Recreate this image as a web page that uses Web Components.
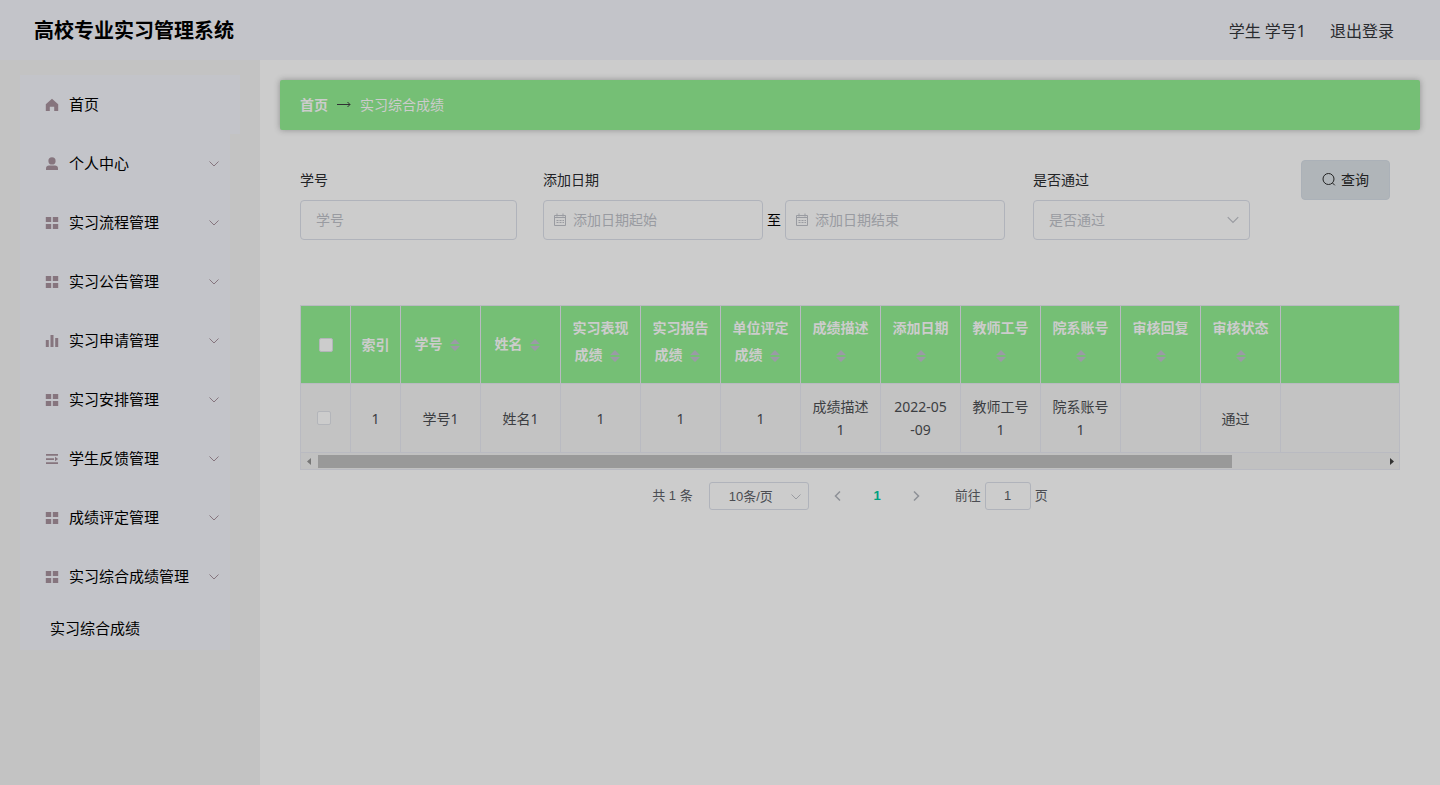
<!DOCTYPE html>
<html lang="zh-CN">
<head>
<meta charset="utf-8">
<title>高校专业实习管理系统</title>
<style>
html, body { margin: 0; min-height: 100%; }
body { background: #ccc; color: #000; font-family: "Noto Sans", "Noto Sans CJK SC", sans-serif; font-size: 14px; }
</style>
</head>
<body>
<app-shell>
  <app-header slot="header" name="高校专业实习管理系统" user="学生 学号1"></app-header>
  <side-menu slot="side">
    <menu-item icon="home" wide>首页</menu-item>
    <menu-item icon="user" expandable>个人中心</menu-item>
    <menu-item icon="grid" expandable>实习流程管理</menu-item>
    <menu-item icon="grid" expandable>实习公告管理</menu-item>
    <menu-item icon="data" expandable>实习申请管理</menu-item>
    <menu-item icon="grid" expandable>实习安排管理</menu-item>
    <menu-item icon="unfold" expandable>学生反馈管理</menu-item>
    <menu-item icon="grid" expandable>成绩评定管理</menu-item>
    <menu-item icon="grid" expandable>实习综合成绩管理</menu-item>
    <menu-item sub>实习综合成绩</menu-item>
  </side-menu>
  <crumb-bar current="实习综合成绩"></crumb-bar>
  <search-form></search-form>
  <score-table></score-table>
  <page-nav></page-nav>
</app-shell>
<script>
const chevron = '<svg class="chev" width="12" height="12" viewBox="0 0 12 12" fill="none" stroke="currentColor" aria-hidden="true"><path d="M1.5 3.5 6 8l4.500-4.500"/></svg>';
const icons = {
  home: '<path d="M7 .8.8 6.200V13h4V8.800h4.400V13h4V6.200z"/>',
  user: '<circle cx="7" cy="3.900" r="3.600"/><path d="M1 13v-1.600C1 9.600 2.300 8.600 4 8.600h6c1.700 0 3 1 3 2.800V13z"/>',
  grid: '<path d="M.8 1h5.400v5H.8zM7.800 1h5.400v5H7.800zM.8 8h5.400v5H.8zM7.800 8h5.400v5H7.800z"/>',
  data: '<path d="M.8 6h3v7h-3zM5.500 1h3v12h-3zM10.200 4h3v9h-3z"/>',
  unfold: '<path d="M1 2h12v1.700H1zM1 6.200h8v1.700H1zM1 10.300h12V12H1zM10 4.700 13.200 7 10 9.300z"/>'
};

class Base extends HTMLElement {
  connectedCallback() {
    if (this.shadowRoot) return;
    this.attachShadow({ mode: 'open' }).innerHTML =
      '<style>:host{display:block}*{box-sizing:border-box}input,select,button{font:inherit;margin:0}' + this.css() + '</style>' + this.html();
  }
}

customElements.define('app-shell', class extends Base {
  css() { return `
    :host { display: flex; flex-direction: column; min-height: 100vh; }
    .body { display: flex; flex: 1; }
    aside { width: 260px; flex: none; background: #c3c3c3; padding: 15px 20px; box-sizing: border-box; }
    main { flex: 1; min-width: 0; padding: 20px; }`; }
  html() { return '<slot name="header"></slot><div class="body"><aside><slot name="side"></slot></aside><main><slot></slot></main></div>'; }
});

customElements.define('app-header', class extends Base {
  css() { return `
    header { display: flex; align-items: center; height: 60px; padding: 2px 46px 0 34px; background: #c3c4c9; }
    h1 { margin: 0; flex: 1; font-size: 20px; line-height: 30px; font-weight: 700; }
    nav { display: flex; gap: 24px; font-size: 16px; line-height: 30px; color: #292b2f; }
    a { color: inherit; text-decoration: none; }`; }
  html() { return `<header><h1>${this.getAttribute('name')}</h1><nav><span>${this.getAttribute('user')}</span><a href="#logout">退出登录</a></nav></header>`; }
});

customElements.define('side-menu', class extends Base {
  css() { return ''; }
  html() { return '<nav><slot></slot></nav>'; }
});

customElements.define('menu-item', class extends Base {
  css() { return `
    :host { margin-right: 10px; background: #c3c4c9; }
    :host([wide]) { margin-right: 0; }
    a { display: flex; align-items: center; height: 59px; padding: 0 10px 0 25px; color: #000; font-size: 15px; line-height: 25px; text-decoration: none; }
    :host([sub]) a { height: 44px; padding-left: 30px; }
    .icon { margin-right: 10px; fill: #86757e; }
    .chev { margin-left: auto; color: #86757e; }`; }
  html() {
    const icon = icons[this.getAttribute('icon')];
    return `<a href="#">${icon ? `<svg class="icon" width="14" height="14" viewBox="0 0 14 14" aria-hidden="true">${icon}</svg>` : ''}<slot></slot>${this.hasAttribute('expandable') ? chevron : ''}</a>`;
  }
});

customElements.define('crumb-bar', class extends Base {
  css() { return `
    nav { display: flex; align-items: center; height: 50px; padding: 0 20px; background: #75bf75; border-radius: 2px; box-shadow: 0 0 6px rgba(0,0,0,.3); line-height: 24px; color: #ccc; }
    a { color: inherit; font-weight: 700; text-decoration: none; }
    svg { margin: 0 8px; }`; }
  html() { return `<nav aria-label="面包屑"><a href="#">首页</a><svg width="16" height="10" viewBox="0 0 16 10" fill="none" stroke="#303133" aria-hidden="true"><path d="M1 4.500h13M11.500 2 14 4.500 11.500 7"/></svg><span>${this.getAttribute('current')}</span></nav>`; }
});

customElements.define('search-form', class extends Base {
  css() { return `
    form { display: flex; align-items: flex-start; padding: 30px 30px 0 20px; }
    label { display: block; line-height: 40px; color: #222326; }
    .field { width: 217px; margin-right: 26px; }
    .range { margin-right: 28px; }
    .row { display: flex; align-items: center; gap: 4px; line-height: 24px; }
    .box { position: relative; display: block; }
    .row .box { width: 220px; }
    input, select { display: block; width: 100%; height: 40px; padding: 0 15px 2px; border: 1px solid #b0b3bb; border-radius: 4px; background: none; color: #999ba1; appearance: none; outline: 0; }
    input::placeholder { color: #999ba1; opacity: 1; }
    .row input { padding-left: 29px; }
    .cal { position: absolute; left: 10px; top: 13px; color: #999ba1; }
    .chev { position: absolute; right: 10px; top: 13px; width: 14px; height: 14px; color: #999ba1; }
    button { display: flex; align-items: center; justify-content: center; gap: 5px; width: 89px; height: 40px; margin-left: auto; padding: 0 0 2px; border: 1px solid #abb1b8; border-radius: 4px; background: #b0b5b9; color: #222; }`; }
  html() {
    const cal = '<svg class="cal" width="14" height="14" viewBox="0 0 14 14" fill="none" stroke="currentColor" aria-hidden="true"><path d="M1.500 2.500h11v10h-11zM1.500 4.500h11M4 .5v3M10 .5v3M3.500 7.500h2M6.500 7.500h2M9.500 7.500h1.500M3.500 9.500h2M6.500 9.500h2M9.500 9.500h1.500"/></svg>';
    return `<form>
      <div class="field"><label for="no">学号</label><input id="no" placeholder="学号"></div>
      <div class="range"><label for="from">添加日期</label><div class="row">
        <span class="box">${cal}<input id="from" placeholder="添加日期起始"></span><span>至</span>
        <span class="box">${cal}<input aria-label="添加日期结束" placeholder="添加日期结束"></span></div></div>
      <div class="field"><label for="pass">是否通过</label><span class="box"><select id="pass"><option>是否通过</option></select>${chevron}</span></div>
      <button type="button"><svg width="14" height="14" viewBox="0 0 14 14" fill="none" stroke="currentColor" aria-hidden="true"><circle cx="6.500" cy="7" r="5.500"/><path d="m10.500 11 2.300 2.300"/></svg>查询</button>
    </form>`;
  }
});

customElements.define('score-table', class extends Base {
  css() { return `
    :host { margin: 65px 20px 0; }
    .frame { border: 1px solid #b9bac1; }
    .view { overflow: hidden; }
    table { width: 100%; min-width: 1280px; table-layout: fixed; border-collapse: separate; border-spacing: 0; }
    th, td { padding: 10px; text-align: center; vertical-align: middle; line-height: 23px; border-right: 1px solid #b9bac1; border-bottom: 1px solid #b9bac1; word-break: break-all; }
    th { height: 78px; background: #75bf75; color: #ccc; font-weight: 700; }
    td { height: 69px; background: #c3c3c3; color: #3c3e42; }
    .narrow { width: 50px; padding: 10px 0; }
    .norm { width: 80px; }
    .sort { display: inline-flex; width: 24px; height: 34px; align-items: center; justify-content: center; vertical-align: middle; }
    input { display: block; width: 14px; height: 14px; margin: 0 auto; appearance: none; border: 1px solid #b3b5ba; border-radius: 2px; background: #ccc; }
    td input { margin-left: 16px; }
    .tag { padding-right: 10px; }
    .bar { display: flex; align-items: center; height: 16px; background: #c1c1c1; }
    .thumb { flex: 914; height: 13px; background: #999; }
    .rest { flex: 151; }
    .bar svg { flex: none; }`; }
  html() {
    const sort = '<span class="sort"><svg width="10" height="12" viewBox="0 0 10 12" fill="#9a9ba5" aria-hidden="true"><path d="M0 5 5 0l5 5zM0 7h10l-5 5z"/></svg></span>';
    const heads = ['学号','姓名','实习表现成绩','实习报告成绩','单位评定成绩','成绩描述','添加日期','教师工号','院系账号','审核回复','审核状态'];
    const cells = ['学号1','姓名1','1','1','1','成绩描述1','2022-05<br>-09','教师工号1','院系账号1','','<span class="tag">通过</span>'];
    return `<div class="frame"><div class="view"><table>
      <thead><tr><th class="narrow"><input type="checkbox" aria-label="全选"></th><th class="narrow">索引</th>${heads.map(h => `<th class="norm">${h}${sort}</th>`).join('')}<th></th></tr></thead>
      <tbody><tr><td class="narrow"><input type="checkbox" aria-label="选择第1行"></td><td class="narrow">1</td>${cells.map(c => `<td>${c}</td>`).join('')}<td></td></tr></tbody>
    </table></div>
    <div class="bar" aria-hidden="true"><svg width="17" height="17" viewBox="0 0 17 17" fill="#777"><path d="M10 5v7L6 8.500z"/></svg><span class="thumb"></span><span class="rest"></span><svg width="16" height="17" viewBox="0 0 16 17" fill="#333"><path d="M7 5v7l4-3.500z"/></svg></div></div>`;
  }
});

customElements.define('page-nav', class extends Base {
  css() { return `
    nav { display: flex; justify-content: center; align-items: center; padding-top: 12px; font-family: "Liberation Sans", "Noto Sans CJK SC", sans-serif; font-size: 13px; line-height: 28px; color: #4b4d52; }
    .size { position: relative; width: 100px; margin: 0 10px 0 16px; }
    select, input { display: block; width: 100%; height: 28px; padding: 0; border: 1px solid #b0b3bb; border-radius: 3px; background: none; color: inherit; text-align: center; appearance: none; outline: 0; }
    select { padding: 0 16px 0 0; text-align-last: center; }
    .size .chev { position: absolute; right: 7px; top: 9px; color: #999ba1; }
    button { display: flex; align-items: center; justify-content: center; width: 39px; height: 28px; padding: 0; border: 0; background: none; color: #8d9096; }
    .on { color: #00a080; font-weight: 700; }
    label { margin-left: 19px; display: flex; gap: 4px; }
    label input { width: 46px; }`; }
  html() {
    const arrow = d => `<svg width="12" height="12" viewBox="0 0 12 12" fill="none" stroke="currentColor" stroke-width="1.500" aria-hidden="true"><path d="${d}"/></svg>`;
    return `<nav aria-label="分页"><span>共 1 条</span><span class="size"><select aria-label="每页条数"><option>10条/页</option></select>${chevron}</span>
      <button aria-label="上一页">${arrow('M8 1.500 3.500 6 8 10.500')}</button><button class="on">1</button><button aria-label="下一页">${arrow('M4 1.500 8.500 6 4 10.500')}</button>
      <label>前往<input value="1">页</label></nav>`;
  }
});
</script>
</body>
</html>
